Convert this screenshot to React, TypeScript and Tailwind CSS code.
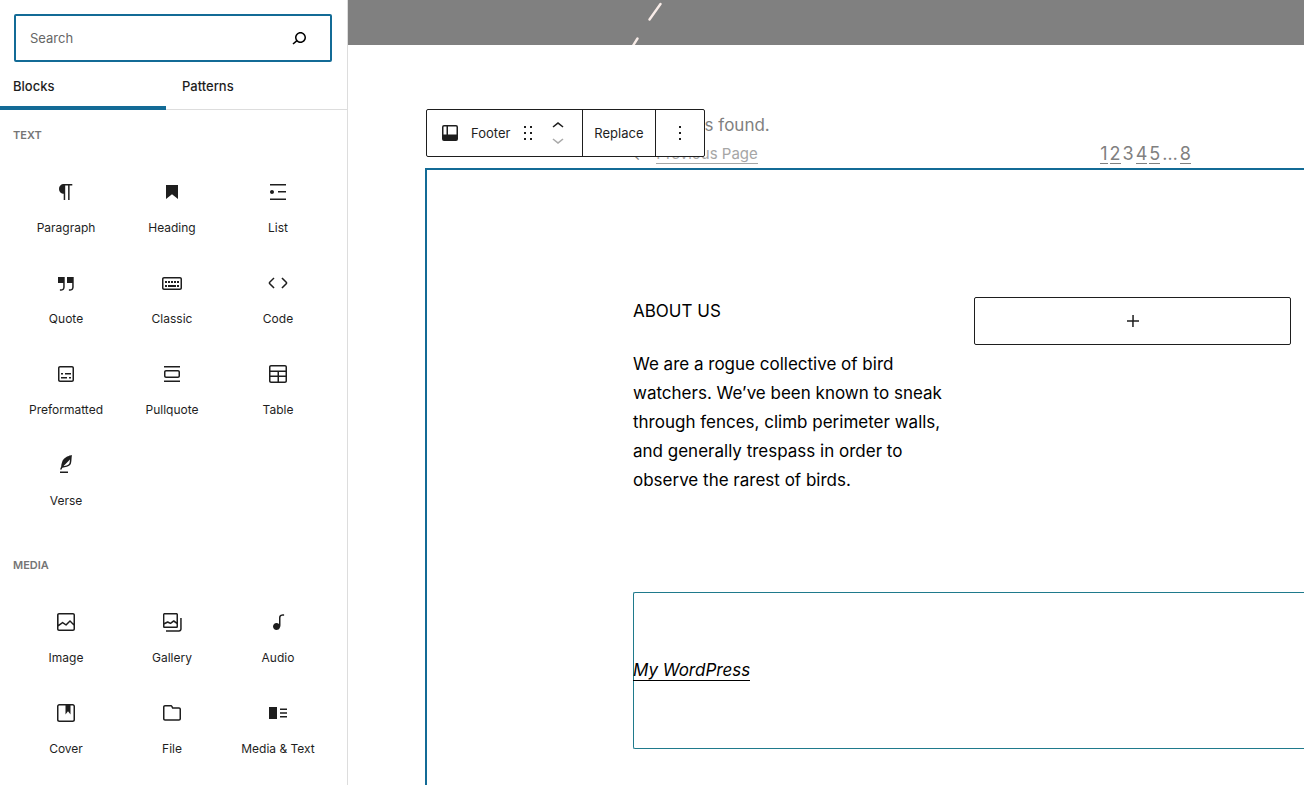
import { useState } from 'react';

type Block = { name: string; path: string };

const TEXT_BLOCKS: Block[] = [
  { name: 'Paragraph', path: 'M18.3 4H9.9v-.1l-.9.2c-2.3.4-4 2.4-4 4.8s1.7 4.4 4 4.8l.7.1V20h1.5V5.5h2.9V20h1.5V5.5h2.7V4z' },
  { name: 'Heading', path: 'M6 5v14l6-4.8 6 4.8V5z' },
  { name: 'List', path: 'M4 4v1.5h16V4H4zm8 8.5h8V11h-8v1.5zM4 20h16v-1.5H4V20zm4-8c0-1.1-.9-2-2-2s-2 .9-2 2 .9 2 2 2 2-.9 2-2z' },
  { name: 'Quote', path: 'M13 6v6h5.2v4c0 .8-.2 1.4-.5 1.7-.6.6-1.6.6-2.5.5h-.3v1.5h.5c1 0 2.3-.1 3.3-1 .6-.6 1-1.6 1-2.8V6H13zm-9 6h5.2v4c0 .8-.2 1.4-.5 1.7-.6.6-1.6.6-2.5.5h-.3v1.5h.5c1 0 2.3-.1 3.3-1 .6-.6 1-1.6 1-2.8V6H4v6z' },
  { name: 'Classic', path: 'M20 6H4c-1.1 0-2 .9-2 2v9c0 1.1.9 2 2 2h16c1.1 0 2-.9 2-2V8c0-1.1-.9-2-2-2zm.5 11c0 .3-.2.5-.5.5H4c-.3 0-.5-.2-.5-.5V8c0-.3.2-.5.5-.5h16c.3 0 .5.2.5.5v9zM10 10H8v2h2v-2zm-5 2h2v-2H5v2zm8-2h-2v2h2v-2zm-5 6h8v-2H8v2zm6-4h2v-2h-2v2zm3 0h2v-2h-2v2zm0 4h2v-2h-2v2zM5 16h2v-2H5v2z' },
  { name: 'Code', path: 'M20.8 10.7l-4.3-4.3-1.1 1.1 4.3 4.3c.1.1.1.3 0 .4l-4.3 4.3 1.1 1.1 4.3-4.3c.7-.8.7-1.9 0-2.6zM4.2 11.8l4.3-4.3-1-1-4.3 4.3c-.7.7-.7 1.8 0 2.5l4.3 4.3 1.1-1.1-4.3-4.3c-.2-.1-.2-.3-.1-.4z' },
  { name: 'Preformatted', path: 'M18 4H6c-1.1 0-2 .9-2 2v12c0 1.1.9 2 2 2h12c1.1 0 2-.9 2-2V6c0-1.1-.9-2-2-2zm.5 14c0 .3-.2.5-.5.5H6c-.3 0-.5-.2-.5-.5V6c0-.3.2-.5.5-.5h12c.3 0 .5.2.5.5v12zM7 16.5h6V15H7v1.5zm4-4h6V11h-6v1.5zM9 11H7v1.5h2V11zm6 5.5h2V15h-2v1.5z' },
  { name: 'Pullquote', path: 'M18 8H6c-1.1 0-2 .9-2 2v4c0 1.1.9 2 2 2h12c1.1 0 2-.9 2-2v-4c0-1.1-.9-2-2-2zm.5 6c0 .3-.2.5-.5.5H6c-.3 0-.5-.2-.5-.5v-4c0-.3.2-.5.5-.5h12c.3 0 .5.2.5.5v4zM4 4v1.5h16V4H4zm0 16h16v-1.5H4V20z' },
  { name: 'Table', path: 'M19 3H5c-1.1 0-2 .9-2 2v14c0 1.1.9 2 2 2h14c1.1 0 2-.9 2-2V5c0-1.1-.9-2-2-2zM5 4.5h14c.3 0 .5.2.5.5v3.5h-15V5c0-.3.2-.5.5-.5zm8 5.5h6.5v3.5H13V10zm-1.5 3.5h-7V10h7v3.5zm-7 5.5v-4h7v4.5H5c-.3 0-.5-.2-.5-.5zm14.5.5h-6V15h6.5v4c0 .3-.2.5-.5.5z' },
  { name: 'Verse', path: 'M17.8 2l-.9.3c-.1 0-3.6 1-5.2 2.1C10 5.5 9.3 6.5 8.9 7.1c-.6.9-1.7 4.7-1.7 6.3l-.9 2.3c-.2.4 0 .8.4 1 .1 0 .2.1.3.1.3 0 .6-.2.7-.5l.6-1.5c.3 0 .7-.1 1.2-.2.7-.1 1.4-.3 2.2-.5.8-.2 1.6-.5 2.4-.8.7-.3 1.4-.7 1.9-1.2s.8-1.2 1-1.9c.2-.7.3-1.6.4-2.4.1-.8.1-1.7.2-2.5 0-.8.1-1.5.2-2.1V2zm-1.9 5.6c-.1.8-.2 1.5-.3 2.1-.2.6-.4 1-.6 1.3-.3.3-.8.6-1.4.9-.7.3-1.4.5-2.2.8-.6.2-1.3.3-1.8.4L15 7.5c.3-.3.6-.7 1-1.1 0 .4 0 .8-.1 1.2zM6 20h8v-1.5H6V20z' },
];

const MEDIA_BLOCKS: Block[] = [
  { name: 'Image', path: 'M19 3H5c-1.1 0-2 .9-2 2v14c0 1.1.9 2 2 2h14c1.1 0 2-.9 2-2V5c0-1.1-.9-2-2-2zM5 4.5h14c.3 0 .5.2.5.5v8.4l-3-2.9c-.3-.3-.8-.3-1 0L11.9 14 9 12c-.3-.2-.6-.2-.8 0l-3.6 2.6V5c-.1-.3.1-.5.4-.5zm14 15H5c-.3 0-.5-.2-.5-.5v-2.4l4.1-3 3 1.9c.3.2.7.2.9-.1L16 12l3.5 3.4V19c0 .3-.2.5-.5.5z' },
  { name: 'Gallery', path: 'M20.2 8v11c0 .7-.6 1.2-1.2 1.2H6v1.5h13c1.5 0 2.7-1.2 2.7-2.8V8h-1.5zM18 16.4V4.6c0-.9-.7-1.6-1.6-1.6H4.6C3.7 3 3 3.7 3 4.6v11.8c0 .9.7 1.6 1.6 1.6h11.8c.9 0 1.6-.7 1.6-1.6zM4.5 4.6c0-.1.1-.1.1-.1h11.8c.1 0 .1.1.1.1V12l-2.3-1.7c-.3-.2-.6-.2-.9 0l-2.9 2.1L8 11.3c-.2-.1-.5-.1-.7 0l-2.9 1.5V4.6zm0 11.8v-1.8l3.2-1.7 2.4 1.2c.2.1.5.1.8-.1l2.8-2 2.8 2v2.5c0 .1-.1.1-.1.1H4.6c0-.1-.1-.2-.1-.2z' },
  { name: 'Audio', path: 'M17.7 4.3c-1.2 0-2.8 0-3.8 1-.6.6-.9 1.5-.9 2.6V14c-.6-.6-1.5-1-2.5-1C8.6 13 7 14.6 7 16.5S8.6 20 10.5 20c1.5 0 2.8-1 3.3-2.3.5-.8.7-1.8.7-2.5V7.9c0-.7.2-1.2.5-1.6.6-.6 1.8-.6 2.8-.6h.3V4.3h-.4z' },
  { name: 'Cover', path: 'M18.7 3H5.3C4 3 3 4 3 5.3v13.4C3 20 4 21 5.3 21h13.4c1.3 0 2.3-1 2.3-2.3V5.3C21 4 20 3 18.7 3zm.8 15.7c0 .4-.4.8-.8.8H5.3c-.4 0-.8-.4-.8-.8V5.3c0-.4.4-.8.8-.8h6.2v8.9l2.5-3.1 2.5 3.1V4.5h2.2c.4 0 .8.4.8.8v13.4z' },
  { name: 'File', path: 'M19 6.2h-5.9l-.6-1.1c-.3-.7-1-1.1-1.8-1.1H5c-1.1 0-2 .9-2 2v11.8c0 1.1.9 2 2 2h14c1.1 0 2-.9 2-2V8.2c0-1.1-.9-2-2-2zm.5 11.6c0 .3-.2.5-.5.5H5c-.3 0-.5-.2-.5-.5V6c0-.3.2-.5.5-.5h5.8c.2 0 .4.1.4.3l1 2H19c.3 0 .5.2.5.5v9.5z' },
  { name: 'Media & Text', path: 'M3 18h8V6H3v12zM14 7.5V9h7V7.5h-7zm0 5.3h7v-1.5h-7v1.5zm0 3.7h7V15h-7v1.5z' },
];

const TABS = ['Blocks', 'Patterns'];
const PAGES = ['1', '2', '3', '4', '5', '…', '8'];

function Icon({ path, className = '' }: { path: string; className?: string }) {
  return (
    <svg viewBox="0 0 24 24" width="24" height="24" fill="currentColor" fillRule="evenodd" className={className} aria-hidden="true">
      <path d={path} />
    </svg>
  );
}

function BlockSection({ title, blocks }: { title: string; blocks: Block[] }) {
  return (
    <section className="pr-4 pl-[13px]">
      <h2 className="text-[11px] leading-4 font-semibold uppercase text-[#757575]">{title}</h2>
      <div className="mt-[13px] grid grid-cols-3">
        {blocks.map((block) => (
          <button key={block.name} type="button" className="flex h-[91px] flex-col items-center gap-[14px] pt-6 text-xs leading-5 whitespace-nowrap">
            <Icon path={block.path} className="shrink-0" />
            {block.name}
          </button>
        ))}
      </div>
    </section>
  );
}

function Inserter() {
  const [activeTab, setActiveTab] = useState(TABS[0]);

  return (
    <aside className="flex w-[348px] shrink-0 flex-col overflow-hidden border-r border-[#dddddd]">
      <label className="mx-[14px] mt-[14px] mr-[15px] flex h-12 shrink-0 items-center rounded-[2px] border-2 border-[#136b96] pr-[19px] pl-[14px] text-black">
        <input
          type="search"
          aria-label="Search"
          placeholder="Search"
          className="min-w-0 flex-1 text-[13px] leading-5 outline-none placeholder:text-[#666666]"
        />
        <Icon path="M13.5 6C10.5 6 8 8.5 8 11.5c0 1.1.3 2.1.9 3l-3.4 3 1 1.1 3.4-2.9c1 .9 2.2 1.4 3.6 1.4 3 0 5.5-2.5 5.5-5.5C19 8.5 16.5 6 13.5 6zm0 9.5c-2.2 0-4-1.8-4-4s1.8-4 4-4 4 1.8 4 4-1.8 4-4 4z" />
      </label>

      <div role="tablist" className="flex h-12 shrink-0 border-b border-[#dddddd]">
        {TABS.map((tab) => (
          <button
            key={tab}
            type="button"
            role="tab"
            aria-selected={activeTab === tab}
            onClick={() => setActiveTab(tab)}
            className="-mb-px border-b-4 border-transparent pt-1 text-[13px] leading-5 font-medium first:w-[166px] first:pr-4 first:pl-[13px] pl-4 text-left aria-selected:border-[#136b96]"
          >
            {tab}
          </button>
        ))}
      </div>

      <div className="flex flex-col gap-[37px] pt-[17px]">
        <BlockSection title="Text" blocks={TEXT_BLOCKS} />
        <BlockSection title="Media" blocks={MEDIA_BLOCKS} />
      </div>
    </aside>
  );
}

function BlockToolbar() {
  return (
    <div role="toolbar" aria-label="Block tools" className="absolute top-[64px] left-[78px] flex h-12 divide-x divide-[#1e1e1e] rounded-[2px] border border-[#1e1e1e] bg-white text-[13px] leading-5 text-[#1e1e1e]">
      <div className="flex items-center pr-3 pl-[11px]">
        <button type="button" className="flex items-center gap-[9px]">
          <Icon path="M18 5.5h-8v8h8.5V6a.5.5 0 00-.5-.5zm-9.5 8h-3V6a.5.5 0 01.5-.5h2.5v8zM6 4h12a2 2 0 012 2v12a2 2 0 01-2 2H6a2 2 0 01-2-2V6a2 2 0 012-2z" />
          Footer
        </button>
        <button type="button" aria-label="Drag" className="ml-1.5">
          <Icon path="M8 7h2V5H8v2zm0 6h2v-2H8v2zm0 6h2v-2H8v2zm6-14v2h2V5h-2zm0 8h2v-2h-2v2zm0 6h2v-2h-2v2z" />
        </button>
        <div className="ml-1.5 flex flex-col">
          <button type="button" aria-label="Move up" className="flex h-3.5 items-center">
            <Icon path="M6.5 12.4L12 8l5.5 4.4-.9 1.2L12 10l-4.5 3.6-1-1.2z" />
          </button>
          <button type="button" aria-label="Move down" disabled className="flex h-3.5 items-center text-[#aaaaaa]">
            <Icon path="M17.5 11.6L12 16l-5.5-4.4.9-1.2L12 14l4.5-3.6 1 1.2z" />
          </button>
        </div>
      </div>
      <button type="button" className="px-[11px]">Replace</button>
      <button type="button" aria-label="Options" className="px-3">
        <Icon path="M13 19h-2v-2h2v2zm0-6h-2v-2h2v2zm0-6h-2V5h2v2z" />
      </button>
    </div>
  );
}

function Canvas() {
  return (
    <main className="flex min-w-0 flex-1 flex-col overflow-hidden text-[17px] leading-[29px] text-black">
      {/* Bottom edge of the cover block above the query */}
      <div className="h-[45px] shrink-0 bg-[#808080]">
        <svg width="320" height="45" viewBox="0 0 320 45" fill="none" stroke="#f8ece8" strokeWidth="2.4" strokeLinecap="round" aria-hidden="true">
          <path d="M312.500 4l-11 15.500M289.500 38.500l-5 8" />
        </svg>
      </div>

      <div className="relative flex flex-1 flex-col pt-[66px] pl-[77px]">
        <div className="flex flex-col pl-[207px] text-[#808080]">
          <p>No results found.</p>
          <nav aria-label="Pagination" className="flex items-center justify-between pr-[113px]">
            <div className="flex items-center gap-2.5 text-[15px] leading-[29px] text-[#a6a6a6]">
              <span className="text-[#808080]">←</span>
              <a href="#previous" className="border-b border-current leading-[18px]">Previous Page</a>
            </div>
            <div className="flex gap-0.5 text-lg leading-[18px]">
              {PAGES.map((page) =>
                page === '3' || page === '…' ? (
                  <span key={page}>{page}</span>
                ) : (
                  <a key={page} href="#page" className="border-b border-current">{page}</a>
                ),
              )}
            </div>
          </nav>
        </div>

        <footer className="-mt-px flex flex-1 flex-col border-t-2 border-l-2 border-[#136b96] pl-[206px]">
          <div className="grid grid-cols-2 gap-6 pt-[127px] pr-[13px]">
            <div className="flex flex-col gap-6">
              <h3>ABOUT US</h3>
              <p>
                We are a rogue collective of bird watchers. We’ve been known to sneak through fences, climb perimeter walls, and generally trespass in order to observe the rarest of birds.
              </p>
            </div>
            <button type="button" aria-label="Add block" className="flex h-12 items-center justify-center rounded-[2px] border border-[#1e1e1e] text-[#1e1e1e]">
              <Icon path="M18 11.2h-5.2V6h-1.5v5.2H6v1.5h5.2V18h1.5v-5.2H18z" />
            </button>
          </div>

          <div className="mt-[97px] flex h-[157px] items-center rounded-l-[2px] border-y border-l border-[#1f7a8c]">
            <a href="#home" className="-ml-px border-b border-black leading-[19px] italic">My WordPress</a>
          </div>
        </footer>

        <BlockToolbar />
      </div>
    </main>
  );
}

export default function App() {
  return (
    <div className="flex h-screen overflow-hidden bg-white font-['Inter','Liberation_Sans',sans-serif] text-[#1e1e1e]">
      <Inserter />
      <Canvas />
    </div>
  );
}
